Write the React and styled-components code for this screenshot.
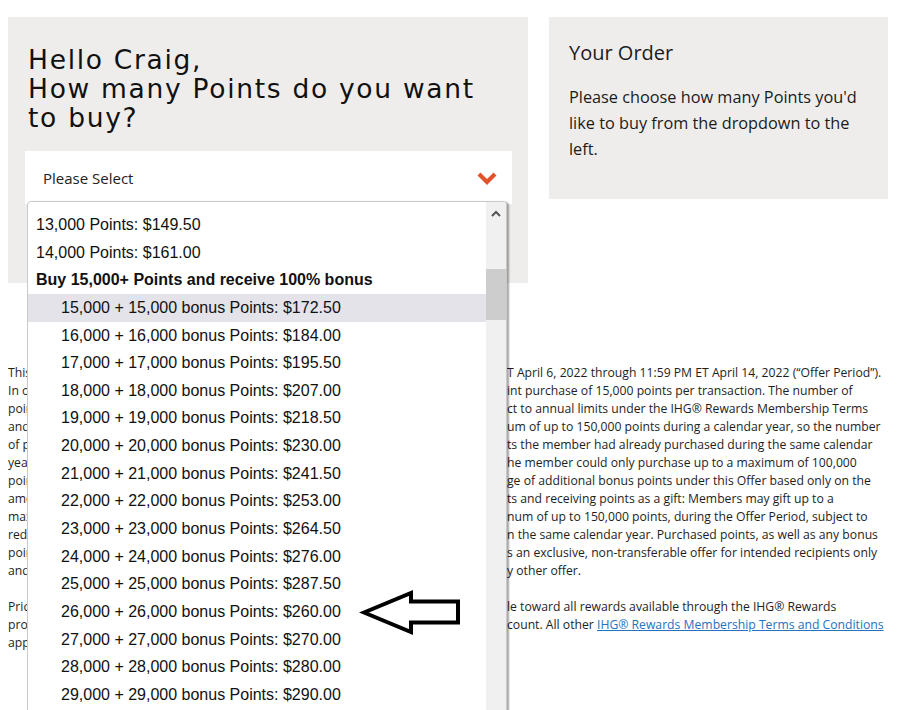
import React from "react"
import styled, { createGlobalStyle } from "styled-components"

const GlobalStyle = createGlobalStyle`
  html, body {
    margin: 0;
    padding: 0;
    background: #ffffff;
    overflow: hidden;
  }
  body {
    font-family: "Open Sans", Lato, sans-serif;
    color: #1b1b1b;
  }
`

const Page = styled.div`
  width: 918px;
  height: 710px;
  overflow: hidden;
  box-sizing: border-box;
  padding: 17px 0 0 8px;
`

const TopRow = styled.div`
  display: flex;
  align-items: flex-start;
  gap: 21px;
`

const LeftPanel = styled.section`
  width: 520px;
  height: 266px;
  box-sizing: border-box;
  background: #efedec;
  padding: 28px 16px 0 17px;
`

const Heading = styled.h1`
  max-width: 470px;
  margin: 0 0 19px 3px;
  font-family: "DejaVu Sans", sans-serif;
  font-weight: 400;
  font-size: 26.5px;
  line-height: 29px;
  letter-spacing: 1.7px;
  color: #111;
`

const SelectWrap = styled.div`
  position: relative;
`

const SelectBox = styled.div`
  height: 53px;
  background: #fff;
  display: flex;
  align-items: center;
  justify-content: space-between;
  padding: 0 15px 0 18px;
  font-size: 15px;
  color: #222;
`

const DropList = styled.div`
  position: absolute;
  top: 50px;
  left: 2px;
  width: 478px;
  height: 515px;
  display: flex;
  background: #fff;
  border: 1px solid #c9c9c9;
  border-radius: 4px 4px 0 0;
  box-shadow: 2px 1px 2px rgba(0, 0, 0, 0.35);
  z-index: 5;
  overflow: hidden;
`

const Options = styled.div`
  flex: 1;
  padding-top: 9px;
  font-family: "Liberation Sans", Arial, sans-serif;
  font-size: 16px;
  color: #111;
`

const Option = styled.div`
  height: 27.65px;
  line-height: 27.65px;
  padding-left: ${(p) => (p.$indent ? 33 : 8)}px;
  font-weight: ${(p) => (p.$group ? 700 : 400)};
  background: ${(p) => (p.$active ? "#e3e3e9" : "transparent")};
  white-space: nowrap;
`

const Scrollbar = styled.div`
  width: 20px;
  background: #f0f0f0;
  display: flex;
  flex-direction: column;
  align-items: center;
`

const ScrollArrow = styled.div`
  height: 22px;
  display: flex;
  align-items: center;
  justify-content: center;
`

const Thumb = styled.div`
  width: 100%;
  height: 51px;
  margin-top: 45px;
  background: #cdcdcd;
`

const RightPanel = styled.aside`
  width: 339px;
  height: 182px;
  box-sizing: border-box;
  background: #efedec;
  padding: 23px 18px 0 20px;
`

const OrderTitle = styled.h2`
  margin: 0 0 18px;
  font-weight: 400;
  font-size: 20px;
  line-height: 26px;
  color: #1b1b1b;
`

const OrderText = styled.p`
  margin: 0;
  font-size: 16.3px;
  line-height: 26px;
  color: #1b1b1b;
`

const Terms = styled.div`
  margin-top: 81px;
  font-size: 12.2px;
  line-height: 18px;
  color: #1e1e1e;
`

const TermsLine = styled.div`
  display: flex;
  height: 18px;
  white-space: nowrap;
  margin-top: ${(p) => (p.$gap ? 18 : 0)}px;
`

const Head = styled.span`
  width: 499px;
  flex-shrink: 0;
  overflow: hidden;
`

const Tail = styled.span``

const TermsLink = styled.a`
  color: #2572c0;
  text-decoration: underline;
`

const Annotation = styled.svg`
  position: absolute;
  left: 359px;
  top: 589px;
  z-index: 10;
`

const Chevron = () => (
  <svg width="20" height="14" viewBox="0 0 20 14">
    <path d="M2 3 L10 11 L18 3" fill="none" stroke="#e0542c" strokeWidth="4.2" strokeLinecap="butt" />
  </svg>
)

const options = [
  { label: "13,000 Points: $149.50" },
  { label: "14,000 Points: $161.00" },
  { label: "Buy 15,000+ Points and receive 100% bonus", group: true },
  ...[
    [15, "172.50"],
    [16, "184.00"],
    [17, "195.50"],
    [18, "207.00"],
    [19, "218.50"],
    [20, "230.00"],
    [21, "241.50"],
    [22, "253.00"],
    [23, "264.50"],
    [24, "276.00"],
    [25, "287.50"],
    [26, "260.00"],
    [27, "270.00"],
    [28, "280.00"],
    [29, "290.00"],
    [30, "300.00"],
  ].map(([n, price]) => ({
    label: `${n},000 + ${n},000 bonus Points: $${price}`,
    indent: true,
    active: n === 15,
  })),
]

const terms = [
  ["This offer is valid for Points purchased from 12:00 AM E", "T April 6, 2022 through 11:59 PM ET April 14, 2022 (“Offer Period”)."],
  ["In order to qualify for the bonus, members must make a minimum single Po", "int purchase of 15,000 points per transaction. The number of"],
  ["points that may be purchased and/or received as a gift are subje", "ct to annual limits under the IHG® Rewards Membership Terms"],
  ["and Conditions. Members may purchase a maxim", "um of up to 150,000 points during a calendar year, so the number"],
  ["of points available for purchase may be reduced by any poin", "ts the member had already purchased during the same calendar"],
  ["year. For example, if a member purchased 50,000 points in January, t", "he member could only purchase up to a maximum of 100,000"],
  ["points during the Offer Period. Members will receive a percenta", "ge of additional bonus points under this Offer based only on the"],
  ["amount of points purchased. Limits on gifting poin", "ts and receiving points as a gift: Members may gift up to a"],
  ["maximum of 150,000 points per calendar year and may receive a maxir", "num of up to 150,000 points, during the Offer Period, subject to"],
  ["reduction by the number of points already received as a gift i", "n the same calendar year. Purchased points, as well as any bonus"],
  ["points received in connection with this Offer, are non-refundable. This offer i", "s an exclusive, non-transferable offer for intended recipients only"],
  ["and cannot be combined with an", "y other offer."],
]

export default function App() {
  return (
    <>
      <GlobalStyle />
      <Page>
        <TopRow>
          <LeftPanel>
            <Heading>
              Hello Craig,
              <br />
              How many Points do you want to buy?
            </Heading>
            <SelectWrap>
              <SelectBox>
                <span>Please Select</span>
                <Chevron />
              </SelectBox>
              <DropList>
                <Options>
                  {options.map((o) => (
                    <Option key={o.label} $group={o.group} $indent={o.indent} $active={o.active}>
                      {o.label}
                    </Option>
                  ))}
                </Options>
                <Scrollbar>
                  <ScrollArrow>
                    <svg width="10" height="7" viewBox="0 0 10 7">
                      <path d="M1 6 L5 2 L9 6" fill="none" stroke="#555" strokeWidth="2" />
                    </svg>
                  </ScrollArrow>
                  <Thumb />
                </Scrollbar>
              </DropList>
            </SelectWrap>
          </LeftPanel>
          <RightPanel>
            <OrderTitle>Your Order</OrderTitle>
            <OrderText>Please choose how many Points you'd like to buy from the dropdown to the left.</OrderText>
          </RightPanel>
        </TopRow>
        <Terms>
          {terms.map(([head, tail]) => (
            <TermsLine key={head}>
              <Head>{head}</Head>
              <Tail>{tail}</Tail>
            </TermsLine>
          ))}
          <TermsLine $gap>
            <Head>Prices quoted in USD. Purchased points are fully redeemab</Head>
            <Tail>le toward all rewards available through the IHG® Rewards</Tail>
          </TermsLine>
          <TermsLine>
            <Head>program and will post to the member's IHG Rewards ac</Head>
            <Tail>
              count. All other <TermsLink href="#">IHG® Rewards Membership Terms and Conditions</TermsLink>
            </Tail>
          </TermsLine>
          <TermsLine>
            <Head>apply.</Head>
          </TermsLine>
        </Terms>
        <Annotation width="104" height="48" viewBox="0 0 104 48">
          <path d="M5 23.5 L52 4 L52 12.5 L99 12.5 L99 33.5 L52 33.5 L52 43 Z" fill="#fff" stroke="#000" strokeWidth="4" strokeLinejoin="miter" />
        </Annotation>
      </Page>
    </>
  )
}
